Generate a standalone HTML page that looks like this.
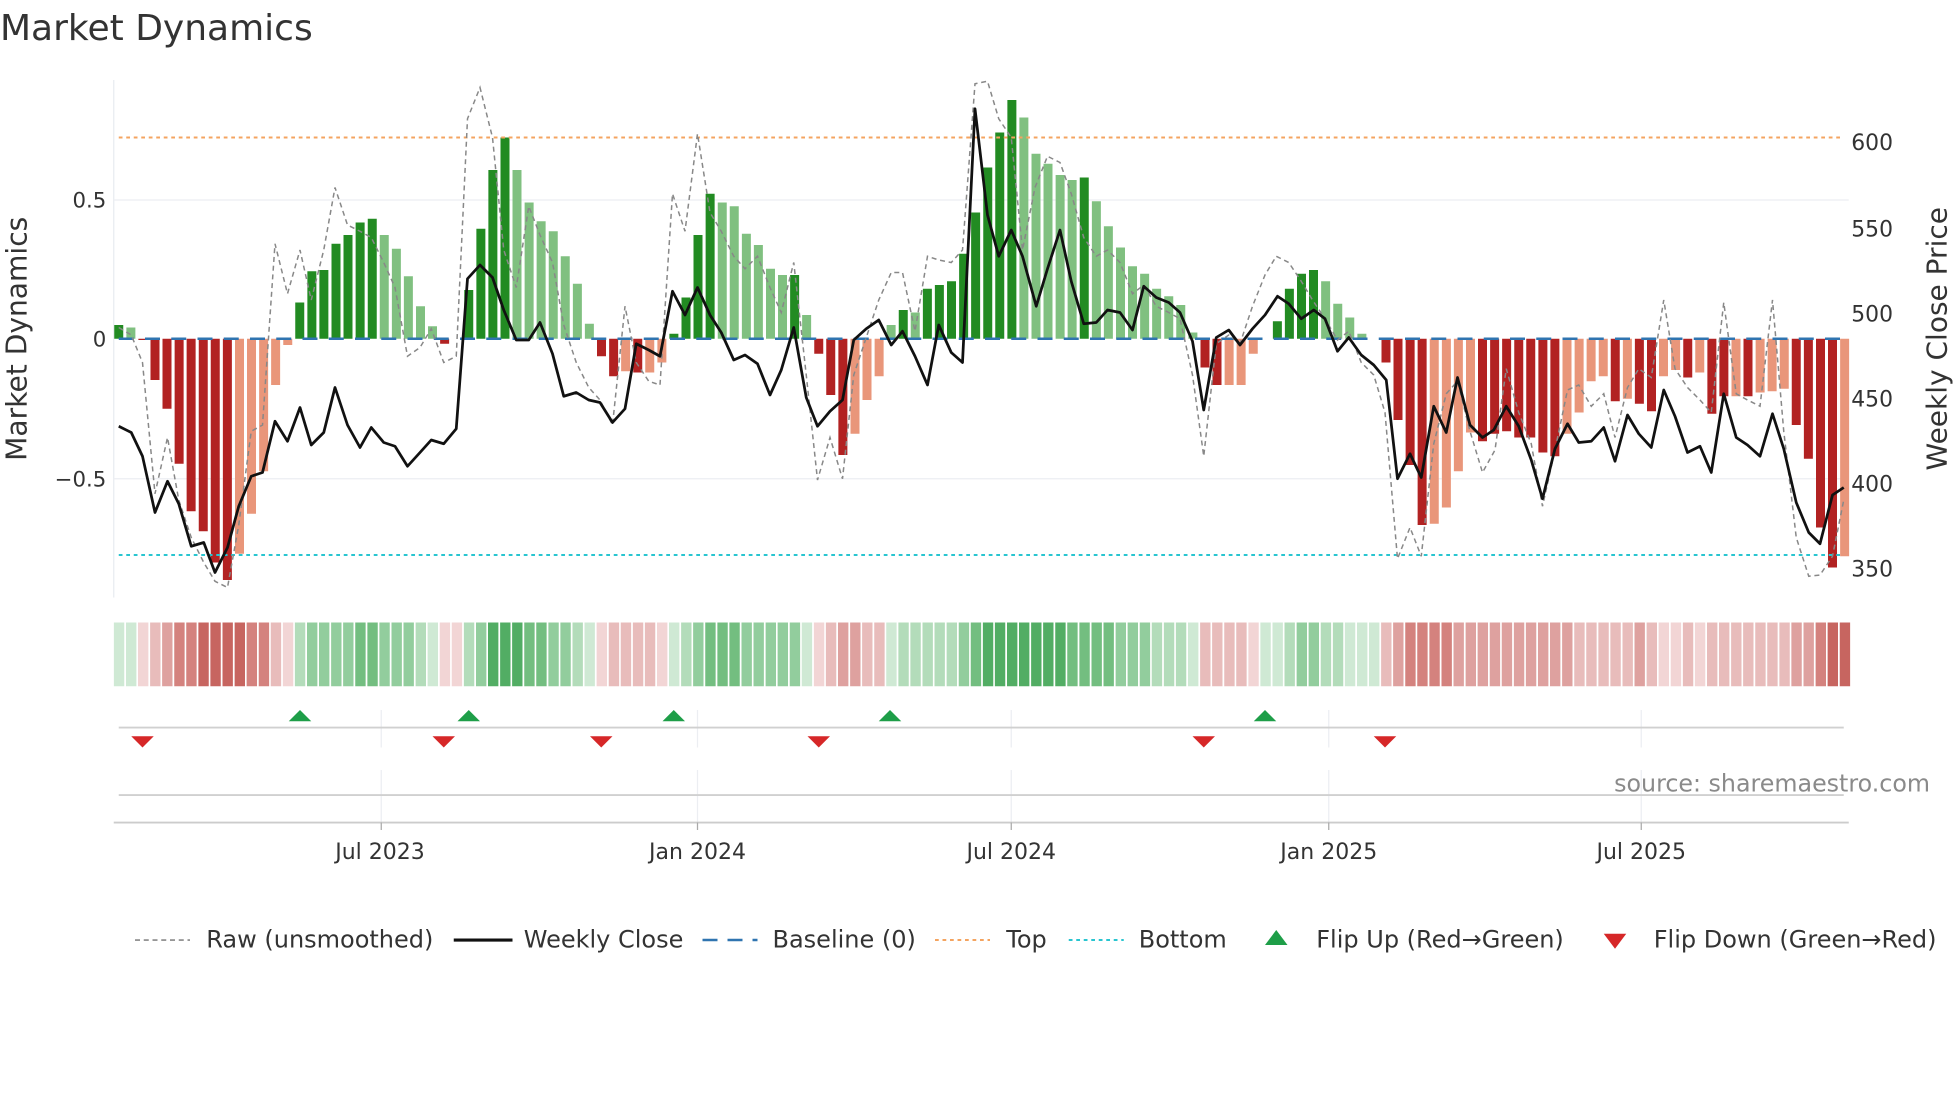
<!DOCTYPE html>
<html><head><meta charset="utf-8"><style>
html,body{margin:0;padding:0;background:#fff;}
svg{display:block;font-family:"DejaVu Sans","Liberation Sans",sans-serif;}
.g{fill:#228b22}.lg{fill:#80c080}.r{fill:#b22222}.s{fill:#e9967a}
.g1{fill:#cfe9d4}.g2{fill:#b3dcba}.g3{fill:#92cd9d}.g4{fill:#73be80}.g5{fill:#52ad64}
.r1{fill:#f2d5d5}.r2{fill:#e8bcbb}.r3{fill:#dea19f}.r4{fill:#d4827e}.r5{fill:#c76560}
</style></head><body>
<svg width="1960" height="1102" viewBox="0 0 1568 881.6" xmlns="http://www.w3.org/2000/svg">
<text x="0" y="32" font-size="28.8" fill="#333">Market Dynamics</text>
<!-- axes/grid -->
<line x1="91" y1="64" x2="91" y2="478" stroke="#e8ebf0" stroke-width="1"/>
<line x1="91" y1="160" x2="1479" y2="160" stroke="#eceef2" stroke-width="1"/>
<line x1="91" y1="383" x2="1479" y2="383" stroke="#eceef2" stroke-width="1"/>
<text x="85" y="166" font-size="17" fill="#333" text-anchor="end">0.5</text>
<text x="85" y="277" font-size="17" fill="#333" text-anchor="end">0</text>
<text x="85" y="389" font-size="17" fill="#333" text-anchor="end">−0.5</text>
<text transform="translate(21,271) rotate(-90)" font-size="22.5" fill="#333" text-anchor="middle">Market Dynamics</text>
<g font-size="17.5" fill="#333">
<text x="1481" y="120">600</text><text x="1481" y="189">550</text><text x="1481" y="257">500</text>
<text x="1481" y="325">450</text><text x="1481" y="393">400</text><text x="1481" y="461">350</text>
</g>
<text transform="translate(1557,271) rotate(-90)" font-size="22.4" fill="#333" text-anchor="middle">Weekly Close Price</text>
<!-- bars -->
<g>
<rect class="g" x="91.4" y="260" width="7.2" height="11"/>
<rect class="lg" x="101.1" y="262" width="7.2" height="9"/>
<rect class="r" x="110.7" y="271" width="7.2" height="1"/>
<rect class="r" x="120.4" y="271" width="7.2" height="33"/>
<rect class="r" x="130.0" y="271" width="7.2" height="56"/>
<rect class="r" x="139.7" y="271" width="7.2" height="100"/>
<rect class="r" x="149.3" y="271" width="7.2" height="138"/>
<rect class="r" x="159.0" y="271" width="7.2" height="154"/>
<rect class="r" x="168.6" y="271" width="7.2" height="179"/>
<rect class="r" x="178.3" y="271" width="7.2" height="193"/>
<rect class="s" x="188.0" y="271" width="7.2" height="172"/>
<rect class="s" x="197.6" y="271" width="7.2" height="140"/>
<rect class="s" x="207.3" y="271" width="7.2" height="106"/>
<rect class="s" x="216.9" y="271" width="7.2" height="37"/>
<rect class="s" x="226.6" y="271" width="7.2" height="5"/>
<rect class="g" x="236.2" y="242" width="7.2" height="29"/>
<rect class="g" x="245.9" y="217" width="7.2" height="54"/>
<rect class="g" x="255.5" y="216" width="7.2" height="55"/>
<rect class="g" x="265.2" y="195" width="7.2" height="76"/>
<rect class="g" x="274.8" y="188" width="7.2" height="83"/>
<rect class="g" x="284.5" y="178" width="7.2" height="93"/>
<rect class="g" x="294.2" y="175" width="7.2" height="96"/>
<rect class="lg" x="303.8" y="188" width="7.2" height="83"/>
<rect class="lg" x="313.5" y="199" width="7.2" height="72"/>
<rect class="lg" x="323.1" y="221" width="7.2" height="50"/>
<rect class="lg" x="332.8" y="245" width="7.2" height="26"/>
<rect class="lg" x="342.4" y="261" width="7.2" height="10"/>
<rect class="r" x="352.1" y="271" width="7.2" height="4"/>
<rect class="g" x="371.4" y="232" width="7.2" height="39"/>
<rect class="g" x="381.1" y="183" width="7.2" height="88"/>
<rect class="g" x="390.7" y="136" width="7.2" height="135"/>
<rect class="g" x="400.4" y="110" width="7.2" height="161"/>
<rect class="lg" x="410.0" y="136" width="7.2" height="135"/>
<rect class="lg" x="419.7" y="162" width="7.2" height="109"/>
<rect class="lg" x="429.3" y="177" width="7.2" height="94"/>
<rect class="lg" x="439.0" y="185" width="7.2" height="86"/>
<rect class="lg" x="448.6" y="205" width="7.2" height="66"/>
<rect class="lg" x="458.3" y="227" width="7.2" height="44"/>
<rect class="lg" x="467.9" y="259" width="7.2" height="12"/>
<rect class="r" x="477.6" y="271" width="7.2" height="14"/>
<rect class="r" x="487.3" y="271" width="7.2" height="30"/>
<rect class="s" x="496.9" y="271" width="7.2" height="26"/>
<rect class="r" x="506.6" y="271" width="7.2" height="27"/>
<rect class="s" x="516.2" y="271" width="7.2" height="27"/>
<rect class="s" x="525.9" y="271" width="7.2" height="19"/>
<rect class="g" x="535.5" y="267" width="7.2" height="4"/>
<rect class="g" x="545.2" y="238" width="7.2" height="33"/>
<rect class="g" x="554.8" y="188" width="7.2" height="83"/>
<rect class="g" x="564.5" y="155" width="7.2" height="116"/>
<rect class="lg" x="574.2" y="162" width="7.2" height="109"/>
<rect class="lg" x="583.8" y="165" width="7.2" height="106"/>
<rect class="lg" x="593.5" y="187" width="7.2" height="84"/>
<rect class="lg" x="603.1" y="196" width="7.2" height="75"/>
<rect class="lg" x="612.8" y="215" width="7.2" height="56"/>
<rect class="lg" x="622.4" y="220" width="7.2" height="51"/>
<rect class="g" x="632.1" y="220" width="7.2" height="51"/>
<rect class="lg" x="641.7" y="252" width="7.2" height="19"/>
<rect class="r" x="651.4" y="271" width="7.2" height="12"/>
<rect class="r" x="661.0" y="271" width="7.2" height="45"/>
<rect class="r" x="670.7" y="271" width="7.2" height="93"/>
<rect class="s" x="680.4" y="271" width="7.2" height="76"/>
<rect class="s" x="690.0" y="271" width="7.2" height="49"/>
<rect class="s" x="699.7" y="271" width="7.2" height="30"/>
<rect class="lg" x="709.3" y="260" width="7.2" height="11"/>
<rect class="g" x="719.0" y="248" width="7.2" height="23"/>
<rect class="lg" x="728.6" y="250" width="7.2" height="21"/>
<rect class="g" x="738.3" y="231" width="7.2" height="40"/>
<rect class="g" x="747.9" y="228" width="7.2" height="43"/>
<rect class="g" x="757.6" y="225" width="7.2" height="46"/>
<rect class="g" x="767.3" y="203" width="7.2" height="68"/>
<rect class="g" x="776.9" y="170" width="7.2" height="101"/>
<rect class="g" x="786.6" y="134" width="7.2" height="137"/>
<rect class="g" x="796.2" y="106" width="7.2" height="165"/>
<rect class="g" x="805.9" y="80" width="7.2" height="191"/>
<rect class="lg" x="815.5" y="94" width="7.2" height="177"/>
<rect class="lg" x="825.2" y="123" width="7.2" height="148"/>
<rect class="lg" x="834.8" y="131" width="7.2" height="140"/>
<rect class="lg" x="844.5" y="140" width="7.2" height="131"/>
<rect class="lg" x="854.1" y="144" width="7.2" height="127"/>
<rect class="g" x="863.8" y="142" width="7.2" height="129"/>
<rect class="lg" x="873.5" y="161" width="7.2" height="110"/>
<rect class="lg" x="883.1" y="181" width="7.2" height="90"/>
<rect class="lg" x="892.8" y="198" width="7.2" height="73"/>
<rect class="lg" x="902.4" y="213" width="7.2" height="58"/>
<rect class="lg" x="912.1" y="219" width="7.2" height="52"/>
<rect class="lg" x="921.7" y="231" width="7.2" height="40"/>
<rect class="lg" x="931.4" y="237" width="7.2" height="34"/>
<rect class="lg" x="941.0" y="244" width="7.2" height="27"/>
<rect class="lg" x="950.7" y="266" width="7.2" height="5"/>
<rect class="r" x="960.4" y="271" width="7.2" height="23"/>
<rect class="r" x="970.0" y="271" width="7.2" height="37"/>
<rect class="s" x="979.7" y="271" width="7.2" height="37"/>
<rect class="s" x="989.3" y="271" width="7.2" height="37"/>
<rect class="s" x="999.0" y="271" width="7.2" height="12"/>
<rect class="g" x="1018.3" y="257" width="7.2" height="14"/>
<rect class="g" x="1027.9" y="231" width="7.2" height="40"/>
<rect class="g" x="1037.6" y="219" width="7.2" height="52"/>
<rect class="g" x="1047.2" y="216" width="7.2" height="55"/>
<rect class="lg" x="1056.9" y="225" width="7.2" height="46"/>
<rect class="lg" x="1066.6" y="243" width="7.2" height="28"/>
<rect class="lg" x="1076.2" y="254" width="7.2" height="17"/>
<rect class="lg" x="1085.9" y="267" width="7.2" height="4"/>
<rect class="r" x="1105.2" y="271" width="7.2" height="19"/>
<rect class="r" x="1114.8" y="271" width="7.2" height="65"/>
<rect class="r" x="1124.5" y="271" width="7.2" height="101"/>
<rect class="r" x="1134.1" y="271" width="7.2" height="149"/>
<rect class="s" x="1143.8" y="271" width="7.2" height="148"/>
<rect class="s" x="1153.5" y="271" width="7.2" height="135"/>
<rect class="s" x="1163.1" y="271" width="7.2" height="106"/>
<rect class="s" x="1172.8" y="271" width="7.2" height="75"/>
<rect class="r" x="1182.4" y="271" width="7.2" height="82"/>
<rect class="r" x="1192.1" y="271" width="7.2" height="76"/>
<rect class="r" x="1201.7" y="271" width="7.2" height="74"/>
<rect class="r" x="1211.4" y="271" width="7.2" height="79"/>
<rect class="r" x="1221.0" y="271" width="7.2" height="79"/>
<rect class="r" x="1230.7" y="271" width="7.2" height="91"/>
<rect class="r" x="1240.3" y="271" width="7.2" height="94"/>
<rect class="s" x="1250.0" y="271" width="7.2" height="76"/>
<rect class="s" x="1259.7" y="271" width="7.2" height="59"/>
<rect class="s" x="1269.3" y="271" width="7.2" height="34"/>
<rect class="s" x="1279.0" y="271" width="7.2" height="30"/>
<rect class="r" x="1288.6" y="271" width="7.2" height="50"/>
<rect class="s" x="1298.3" y="271" width="7.2" height="48"/>
<rect class="r" x="1307.9" y="271" width="7.2" height="52"/>
<rect class="r" x="1317.6" y="271" width="7.2" height="58"/>
<rect class="s" x="1327.2" y="271" width="7.2" height="30"/>
<rect class="s" x="1336.9" y="271" width="7.2" height="25"/>
<rect class="r" x="1346.6" y="271" width="7.2" height="31"/>
<rect class="s" x="1356.2" y="271" width="7.2" height="27"/>
<rect class="r" x="1365.9" y="271" width="7.2" height="60"/>
<rect class="r" x="1375.5" y="271" width="7.2" height="46"/>
<rect class="s" x="1385.2" y="271" width="7.2" height="46"/>
<rect class="r" x="1394.8" y="271" width="7.2" height="46"/>
<rect class="s" x="1404.5" y="271" width="7.2" height="43"/>
<rect class="s" x="1414.1" y="271" width="7.2" height="42"/>
<rect class="s" x="1423.8" y="271" width="7.2" height="40"/>
<rect class="r" x="1433.4" y="271" width="7.2" height="69"/>
<rect class="r" x="1443.1" y="271" width="7.2" height="96"/>
<rect class="r" x="1452.8" y="271" width="7.2" height="151"/>
<rect class="r" x="1462.4" y="271" width="7.2" height="183"/>
<rect class="s" x="1472.1" y="271" width="7.2" height="174"/>
</g>
<line x1="95" y1="110" x2="1475" y2="110" stroke="#f4a460" stroke-width="1.6" stroke-dasharray="3 3"/>
<line x1="95" y1="444" x2="1475" y2="444" stroke="#29c5d0" stroke-width="1.6" stroke-dasharray="3 3"/>
<line x1="95" y1="271" x2="1475" y2="271" stroke="#2f74b0" stroke-width="2" stroke-dasharray="12 9"/>
<polyline fill="none" stroke="#888" stroke-width="1.2" stroke-dasharray="4 3" points="95,262 105,268 114,290 124,395 134,350 143,400 153,430 163,450 172,465 182,470 191,420 201,345 210,340 220,195 230,235 240,200 249,240 259,200 268,150 278,180 288,185 297,190 307,210 316,230 326,285 336,278 345,263 355,290 365,285 374,95 384,70 394,110 403,200 413,230 423,165 432,188 442,210 451,260 461,290 471,310 480,320 490,340 500,245 509,290 519,305 528,308 538,155 548,185 558,107 568,170 577,185 587,205 596,215 606,205 616,230 625,250 635,210 645,300 654,384 664,350 674,383 683,300 693,270 703,240 713,218 722,218 732,265 742,205 751,208 761,210 770,200 780,67 790,65 799,95 809,110 818,200 828,150 838,125 848,130 857,155 867,190 877,205 886,200 896,210 906,235 915,228 925,245 935,250 944,255 954,300 963,365 973,275 983,268 992,275 1002,245 1012,220 1021,205 1031,210 1041,225 1050,240 1060,255 1070,272 1079,265 1089,290 1099,300 1108,330 1118,447 1128,422 1137,445 1147,355 1157,315 1166,305 1176,345 1186,378 1196,360 1205,295 1215,330 1225,355 1234,405 1244,360 1254,312 1263,308 1273,325 1283,315 1292,350 1302,310 1311,295 1321,302 1331,240 1340,295 1350,310 1360,320 1369,330 1379,242 1389,315 1398,320 1408,325 1418,240 1427,345 1437,430 1447,461 1456,460 1466,445 1475,400"/>
<polyline fill="none" stroke="#111" stroke-width="2.2" stroke-linejoin="round" points="95,341 105,346 114,365 124,410 134,385 143,403 153,437 163,434 172,458 182,438 191,405 201,381 210,378 220,337 230,353 240,326 249,356 259,346 268,310 278,340 288,358 297,342 307,354 316,357 326,373 336,362 345,352 355,355 365,343 374,223 384,212 394,222 403,248 413,272 423,272 432,258 442,283 451,317 461,314 471,320 480,322 490,338 500,327 509,275 519,280 528,285 538,233 548,252 558,230 568,252 577,266 587,288 596,284 606,291 616,316 625,296 635,262 645,318 654,341 664,329 674,320 683,272 693,263 703,256 713,276 722,265 732,285 742,308 751,260 761,282 770,290 780,87 790,172 799,205 809,184 818,205 829,245 838,215 848,184 857,225 867,259 877,258 886,248 896,250 906,264 915,229 925,238 935,242 944,250 954,273 963,328 973,270 983,264 992,276 1002,263 1012,252 1022,237 1031,243 1041,255 1051,248 1060,255 1070,281 1079,270 1089,284 1099,292 1109,304 1118,383 1128,363 1137,382 1147,325 1157,346 1166,302 1176,340 1186,350 1195,344 1205,325 1215,341 1225,368 1234,399 1244,359 1254,339 1263,354 1273,353 1283,342 1292,369 1302,332 1311,347 1321,358 1331,312 1340,333 1350,362 1360,357 1369,378 1379,315 1389,350 1398,356 1408,365 1418,331 1427,359 1437,402 1447,426 1456,435 1466,396 1475,390"/>
<!-- heat strip -->
<g transform="translate(-0.3,498)">
<rect class="g1" x="91.4" width="8.3" height="51"/><rect class="g1" x="101.1" width="8.3" height="51"/><rect class="r1" x="110.7" width="8.3" height="51"/><rect class="r2" x="120.4" width="8.3" height="51"/><rect class="r3" x="130.0" width="8.3" height="51"/><rect class="r4" x="139.7" width="8.3" height="51"/><rect class="r4" x="149.3" width="8.3" height="51"/><rect class="r5" x="159.0" width="8.3" height="51"/><rect class="r5" x="168.6" width="8.3" height="51"/><rect class="r5" x="178.3" width="8.3" height="51"/><rect class="r5" x="188.0" width="8.3" height="51"/><rect class="r4" x="197.6" width="8.3" height="51"/><rect class="r4" x="207.3" width="8.3" height="51"/><rect class="r2" x="216.9" width="8.3" height="51"/><rect class="r1" x="226.6" width="8.3" height="51"/><rect class="g2" x="236.2" width="8.3" height="51"/><rect class="g3" x="245.9" width="8.3" height="51"/><rect class="g3" x="255.5" width="8.3" height="51"/><rect class="g3" x="265.2" width="8.3" height="51"/><rect class="g3" x="274.8" width="8.3" height="51"/><rect class="g4" x="284.5" width="8.3" height="51"/><rect class="g4" x="294.2" width="8.3" height="51"/><rect class="g3" x="303.8" width="8.3" height="51"/><rect class="g3" x="313.5" width="8.3" height="51"/><rect class="g3" x="323.1" width="8.3" height="51"/><rect class="g2" x="332.8" width="8.3" height="51"/><rect class="g1" x="342.4" width="8.3" height="51"/><rect class="r1" x="352.1" width="8.3" height="51"/><rect class="r1" x="361.7" width="8.3" height="51"/><rect class="g2" x="371.4" width="8.3" height="51"/><rect class="g3" x="381.1" width="8.3" height="51"/><rect class="g5" x="390.7" width="8.3" height="51"/><rect class="g5" x="400.4" width="8.3" height="51"/><rect class="g5" x="410.0" width="8.3" height="51"/><rect class="g4" x="419.7" width="8.3" height="51"/><rect class="g4" x="429.3" width="8.3" height="51"/><rect class="g3" x="439.0" width="8.3" height="51"/><rect class="g3" x="448.6" width="8.3" height="51"/><rect class="g2" x="458.3" width="8.3" height="51"/><rect class="g1" x="467.9" width="8.3" height="51"/><rect class="r1" x="477.6" width="8.3" height="51"/><rect class="r2" x="487.3" width="8.3" height="51"/><rect class="r2" x="496.9" width="8.3" height="51"/><rect class="r2" x="506.6" width="8.3" height="51"/><rect class="r2" x="516.2" width="8.3" height="51"/><rect class="r1" x="525.9" width="8.3" height="51"/><rect class="g1" x="535.5" width="8.3" height="51"/><rect class="g2" x="545.2" width="8.3" height="51"/><rect class="g3" x="554.8" width="8.3" height="51"/><rect class="g4" x="564.5" width="8.3" height="51"/><rect class="g4" x="574.2" width="8.3" height="51"/><rect class="g4" x="583.8" width="8.3" height="51"/><rect class="g3" x="593.5" width="8.3" height="51"/><rect class="g3" x="603.1" width="8.3" height="51"/><rect class="g3" x="612.8" width="8.3" height="51"/><rect class="g3" x="622.4" width="8.3" height="51"/><rect class="g3" x="632.1" width="8.3" height="51"/><rect class="g1" x="641.7" width="8.3" height="51"/><rect class="r1" x="651.4" width="8.3" height="51"/><rect class="r2" x="661.0" width="8.3" height="51"/><rect class="r3" x="670.7" width="8.3" height="51"/><rect class="r3" x="680.4" width="8.3" height="51"/><rect class="r2" x="690.0" width="8.3" height="51"/><rect class="r2" x="699.7" width="8.3" height="51"/><rect class="g1" x="709.3" width="8.3" height="51"/><rect class="g2" x="719.0" width="8.3" height="51"/><rect class="g2" x="728.6" width="8.3" height="51"/><rect class="g2" x="738.3" width="8.3" height="51"/><rect class="g2" x="747.9" width="8.3" height="51"/><rect class="g2" x="757.6" width="8.3" height="51"/><rect class="g3" x="767.3" width="8.3" height="51"/><rect class="g4" x="776.9" width="8.3" height="51"/><rect class="g5" x="786.6" width="8.3" height="51"/><rect class="g5" x="796.2" width="8.3" height="51"/><rect class="g5" x="805.9" width="8.3" height="51"/><rect class="g5" x="815.5" width="8.3" height="51"/><rect class="g5" x="825.2" width="8.3" height="51"/><rect class="g5" x="834.8" width="8.3" height="51"/><rect class="g5" x="844.5" width="8.3" height="51"/><rect class="g4" x="854.1" width="8.3" height="51"/><rect class="g4" x="863.8" width="8.3" height="51"/><rect class="g4" x="873.5" width="8.3" height="51"/><rect class="g4" x="883.1" width="8.3" height="51"/><rect class="g3" x="892.8" width="8.3" height="51"/><rect class="g3" x="902.4" width="8.3" height="51"/><rect class="g3" x="912.1" width="8.3" height="51"/><rect class="g2" x="921.7" width="8.3" height="51"/><rect class="g2" x="931.4" width="8.3" height="51"/><rect class="g2" x="941.0" width="8.3" height="51"/><rect class="g1" x="950.7" width="8.3" height="51"/><rect class="r2" x="960.4" width="8.3" height="51"/><rect class="r2" x="970.0" width="8.3" height="51"/><rect class="r2" x="979.7" width="8.3" height="51"/><rect class="r2" x="989.3" width="8.3" height="51"/><rect class="r1" x="999.0" width="8.3" height="51"/><rect class="g1" x="1008.6" width="8.3" height="51"/><rect class="g1" x="1018.3" width="8.3" height="51"/><rect class="g2" x="1027.9" width="8.3" height="51"/><rect class="g3" x="1037.6" width="8.3" height="51"/><rect class="g3" x="1047.2" width="8.3" height="51"/><rect class="g2" x="1056.9" width="8.3" height="51"/><rect class="g2" x="1066.6" width="8.3" height="51"/><rect class="g1" x="1076.2" width="8.3" height="51"/><rect class="g1" x="1085.9" width="8.3" height="51"/><rect class="g1" x="1095.5" width="8.3" height="51"/><rect class="r2" x="1105.2" width="8.3" height="51"/><rect class="r3" x="1114.8" width="8.3" height="51"/><rect class="r4" x="1124.5" width="8.3" height="51"/><rect class="r4" x="1134.1" width="8.3" height="51"/><rect class="r4" x="1143.8" width="8.3" height="51"/><rect class="r4" x="1153.5" width="8.3" height="51"/><rect class="r3" x="1163.1" width="8.3" height="51"/><rect class="r3" x="1172.8" width="8.3" height="51"/><rect class="r3" x="1182.4" width="8.3" height="51"/><rect class="r3" x="1192.1" width="8.3" height="51"/><rect class="r3" x="1201.7" width="8.3" height="51"/><rect class="r3" x="1211.4" width="8.3" height="51"/><rect class="r3" x="1221.0" width="8.3" height="51"/><rect class="r3" x="1230.7" width="8.3" height="51"/><rect class="r3" x="1240.3" width="8.3" height="51"/><rect class="r3" x="1250.0" width="8.3" height="51"/><rect class="r2" x="1259.7" width="8.3" height="51"/><rect class="r2" x="1269.3" width="8.3" height="51"/><rect class="r2" x="1279.0" width="8.3" height="51"/><rect class="r2" x="1288.6" width="8.3" height="51"/><rect class="r2" x="1298.3" width="8.3" height="51"/><rect class="r3" x="1307.9" width="8.3" height="51"/><rect class="r2" x="1317.6" width="8.3" height="51"/><rect class="r1" x="1327.2" width="8.3" height="51"/><rect class="r1" x="1336.9" width="8.3" height="51"/><rect class="r2" x="1346.6" width="8.3" height="51"/><rect class="r1" x="1356.2" width="8.3" height="51"/><rect class="r2" x="1365.9" width="8.3" height="51"/><rect class="r2" x="1375.5" width="8.3" height="51"/><rect class="r2" x="1385.2" width="8.3" height="51"/><rect class="r2" x="1394.8" width="8.3" height="51"/><rect class="r2" x="1404.5" width="8.3" height="51"/><rect class="r2" x="1414.1" width="8.3" height="51"/><rect class="r2" x="1423.8" width="8.3" height="51"/><rect class="r3" x="1433.4" width="8.3" height="51"/><rect class="r3" x="1443.1" width="8.3" height="51"/><rect class="r4" x="1452.8" width="8.3" height="51"/><rect class="r5" x="1462.4" width="8.3" height="51"/><rect class="r5" x="1472.1" width="8.3" height="51"/>
</g>
<!-- flip markers panel -->
<g stroke="#eceef2" stroke-width="1">
<line x1="305" y1="568" x2="305" y2="598"/><line x1="558" y1="568" x2="558" y2="598"/><line x1="809" y1="568" x2="809" y2="598"/><line x1="1063" y1="568" x2="1063" y2="598"/><line x1="1313" y1="568" x2="1313" y2="598"/>
<line x1="305" y1="616" x2="305" y2="658"/><line x1="558" y1="616" x2="558" y2="658"/><line x1="809" y1="616" x2="809" y2="658"/><line x1="1063" y1="616" x2="1063" y2="658"/><line x1="1313" y1="616" x2="1313" y2="658"/>
</g>
<line x1="95" y1="582" x2="1475" y2="582" stroke="#d0d0d0" stroke-width="1.5"/>
<line x1="95" y1="636" x2="1475" y2="636" stroke="#d0d0d0" stroke-width="1.5"/>
<line x1="91" y1="658" x2="1479" y2="658" stroke="#ccc" stroke-width="1.5"/>
<g fill="#1e9e48">
<polygon points="240,568 231,577 249,577"/><polygon points="375,568 366,577 384,577"/><polygon points="539,568 530,577 548,577"/><polygon points="712,568 703,577 721,577"/><polygon points="1012,568 1003,577 1021,577"/>
</g>
<g fill="#d62728">
<polygon points="105,589 123,589 114,598"/><polygon points="346,589 364,589 355,598"/><polygon points="472,589 490,589 481,598"/><polygon points="646,589 664,589 655,598"/><polygon points="954,589 972,589 963,598"/><polygon points="1099,589 1117,589 1108,598"/>
</g>
<text x="1544" y="633" font-size="19" fill="#8a8a8a" text-anchor="end">source: sharemaestro.com</text>
<g stroke="#aaa" stroke-width="1"><line x1="305" y1="658" x2="305" y2="664"/><line x1="558" y1="658" x2="558" y2="664"/><line x1="809" y1="658" x2="809" y2="664"/><line x1="1063" y1="658" x2="1063" y2="664"/><line x1="1313" y1="658" x2="1313" y2="664"/></g>
<g font-size="17.6" fill="#333" text-anchor="middle">
<text x="304" y="687">Jul 2023</text><text x="558" y="687">Jan 2024</text><text x="809" y="687">Jul 2024</text><text x="1063" y="687">Jan 2025</text><text x="1313" y="687">Jul 2025</text>
</g>
<!-- legend -->
<g font-size="19.2" fill="#333">
<line x1="108" y1="752" x2="152" y2="752" stroke="#888" stroke-width="1.3" stroke-dasharray="4 3"/>
<text x="165" y="758">Raw (unsmoothed)</text>
<line x1="363" y1="752" x2="410" y2="752" stroke="#111" stroke-width="2.5"/>
<text x="419" y="758">Weekly Close</text>
<line x1="562" y1="752" x2="606" y2="752" stroke="#2f74b0" stroke-width="2" stroke-dasharray="12 8"/>
<text x="618" y="758">Baseline (0)</text>
<line x1="748" y1="752" x2="792" y2="752" stroke="#f4a460" stroke-width="1.6" stroke-dasharray="3 3"/>
<text x="805" y="758">Top</text>
<line x1="855" y1="752" x2="899" y2="752" stroke="#29c5d0" stroke-width="1.6" stroke-dasharray="3 3"/>
<text x="911" y="758">Bottom</text>
<polygon points="1021,744 1012,756 1030,756" fill="#1e9e48"/>
<text x="1053" y="758">Flip Up (Red→Green)</text>
<polygon points="1283,747 1301,747 1292,759" fill="#d62728"/>
<text x="1323" y="758">Flip Down (Green→Red)</text>
</g>
</svg>
</body></html>
